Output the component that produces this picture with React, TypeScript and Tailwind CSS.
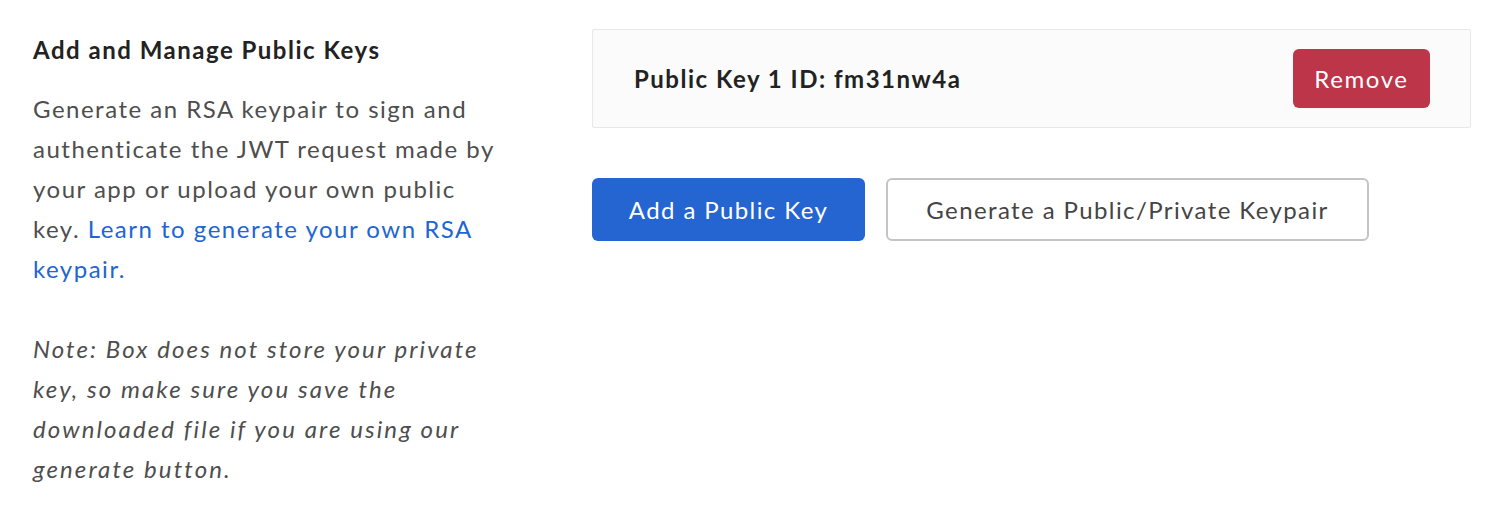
export default function App() {
  return (
    <div className="min-h-[522px] bg-white font-['Lato','Noto_Sans',sans-serif]">
      <div className="flex pl-[33px] pt-[30px]">
        {/* left: description */}
        <div className="w-[466px] shrink-0">
          <h2 className="text-[24px] leading-[40px] font-bold tracking-[1.5px] text-[#222222]">Add and Manage Public Keys</h2>
          <p className="mt-[19px] text-[24px] leading-[40px] tracking-[1.5px] text-[#4e4e4e]">
            Generate an RSA keypair to sign and authenticate the JWT request made by your app or upload your own public key.{' '}
            <a href="#" className="text-[#2165d1]">Learn to generate your own RSA keypair.</a>
          </p>
          <p className="mt-[40px] text-[24px] leading-[40px] italic tracking-[2.1px] text-[#4e4e4e]">
            Note: Box does not store your private key, so make sure you save the downloaded file if you are using our generate button.
          </p>
        </div>

        {/* right: keys */}
        <div className="ml-[93px] w-[879px] -mt-[1px]">
          <div className="flex h-[99px] items-center justify-between rounded-[2px] border border-[#e8e8e8] bg-[#fbfbfb] pl-[41px] pr-[40px]">
            <span className="text-[24px] font-bold tracking-[1.5px] text-[#222222]">Public Key 1 ID: fm31nw4a</span>
            <button className="h-[59px] w-[137px] rounded-[6px] bg-[#bc3548] text-[24px] tracking-[1.6px] text-white">Remove</button>
          </div>
          <div className="mt-[50px] flex gap-[21px]">
            <button className="h-[63px] w-[273px] rounded-[6px] bg-[#2565d1] text-[24px] tracking-[1.4px] text-white">Add a Public Key</button>
            <button className="h-[63px] w-[483px] rounded-[6px] border-2 border-[#c4c4c4] bg-white text-[24px] tracking-[1.4px] text-[#444444]">Generate a Public/Private Keypair</button>
          </div>
        </div>
      </div>
    </div>
  );
}
